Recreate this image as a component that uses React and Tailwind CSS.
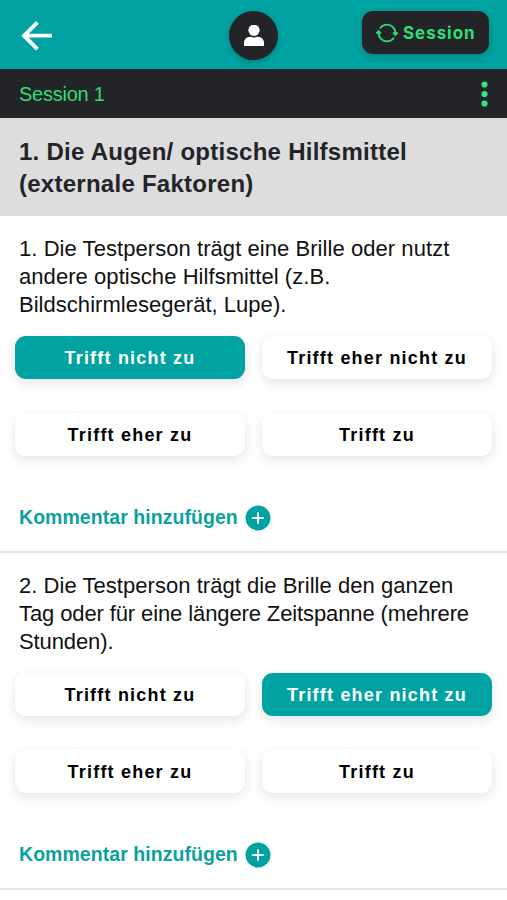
import React from "react";

function SyncIcon() {
  return (
    <svg viewBox="0 0 512 512" className="h-6 w-6 shrink-0" fill="none" stroke="#2fdf75" strokeWidth="40" strokeLinecap="round" strokeLinejoin="round">
      <path d="M434.67 270v-14.2c0-98.73-80.24-178.79-179.2-178.79a179 179 0 0 0-140.14 67.36m-38.53 97v14.8C76.8 355 157 435 256 435a180.45 180.45 0 0 0 140-66.92" />
      <path d="M32 256l44-48 46 48zM480 256l-44 48-46-48z" fill="#2fdf75" strokeWidth="28" />
    </svg>
  );
}

function Header() {
  return (
    <header className="flex h-[69px] bg-[#00a2a2]">
      <svg className="mt-[20px] ml-[20px] h-8 w-8 shrink-0" viewBox="0 0 32 32" fill="none" stroke="#fff" strokeWidth="3.8">
        <path d="M32 15.7H4M17.4 2.3L4 15.7l13.4 13.4" />
      </svg>
      <div className="mt-[11px] ml-[177px] flex h-[49px] w-[49px] shrink-0 items-center justify-center rounded-full bg-[#222428] shadow-[0_3px_6px_rgba(0,0,0,0.18)]">
        <svg className="h-[22px] w-[22px]" viewBox="0 0 22 22" fill="#fff">
          <circle cx="11" cy="5.3" r="5.6" />
          <path d="M1 21v-3.2c0-3.4 2.6-5.9 6.2-6.1 2.4 1.1 5.2 1.1 7.6 0 3.6.2 6.2 2.7 6.2 6.1V21z" />
        </svg>
      </div>
      <button className="mt-[11px] ml-[84px] flex h-[43px] w-[127px] shrink-0 items-center rounded-[11px] bg-[#222428] pl-[13px] font-[family-name:Inter] text-[17px] font-bold tracking-[0.95px] text-[#2fdf75] shadow-[0_3px_8px_rgba(0,0,0,0.18)]">
        <SyncIcon />
        <span className="mt-[3px] ml-[4px]">Session</span>
      </button>
    </header>
  );
}

function Option({ label, active }) {
  return (
    <button
      className={
        "h-[43px] rounded-[11px] pt-px text-[18px] font-bold tracking-[1.2px] whitespace-nowrap shadow-[0_4px_12px_rgba(0,0,0,0.11)] " +
        (active ? "bg-[#00a2a2] text-white" : "bg-white text-black")
      }
    >
      {label}
    </button>
  );
}

const OPTIONS = ["Trifft nicht zu", "Trifft eher nicht zu", "Trifft eher zu", "Trifft zu"];

function Question({ lines, selected }) {
  return (
    <section className="h-[337px] border-b-2 border-[#e4e4e4] pt-[19px]">
      <p className="pl-[19px] text-[22px] leading-[28px] whitespace-nowrap text-[#111]">
        {lines.map(([line, tracking]) => (
          <span key={line} className={"block " + tracking}>{line}</span>
        ))}
      </p>
      <div className="mt-[17px] grid grid-cols-2 gap-x-[17px] gap-y-[34px] px-[15px]">
        {OPTIONS.map((label, i) => (
          <Option key={label} label={label} active={i === selected} />
        ))}
      </div>
      <div className="mt-[49px] flex items-center pl-[19px] text-[19.5px] leading-[26px] font-bold text-[#0aa19f]">
        <span className="-mt-0.5 tracking-[0.05px]">Kommentar hinzufügen</span>
        <svg className="ml-[7px] h-[26px] w-[26px]" viewBox="0 0 26 26">
          <circle cx="13" cy="13" r="12.5" fill="#00a2a2" />
          <path d="M13 7.2v11.6M7.2 13h11.6" stroke="#fff" strokeWidth="1.8" />
        </svg>
      </div>
    </section>
  );
}

export default function App() {
  return (
    <div className="h-[900px] w-[507px] overflow-hidden bg-white font-['Liberation_Sans',Arial,sans-serif]">
      <Header />
      <div className="flex h-[49px] items-center justify-between bg-[#222428] pr-[19px] pl-[19px] text-[20px] text-[#2fdf75]">
        <span className="tracking-[-0.25px]">Session 1</span>
        <svg className="h-[26px] w-[7px]" viewBox="0 0 7 26" fill="#2dea80">
          <circle cx="3.5" cy="3.5" r="3.1" />
          <circle cx="3.5" cy="13" r="3.1" />
          <circle cx="3.5" cy="22.5" r="3.1" />
        </svg>
      </div>
      <h1 className="h-[98px] bg-[#dddddd] pt-[18px] pl-[19px] text-[24px] leading-[32px] font-bold tracking-[0.26px] whitespace-nowrap text-[#222428]">
        <span className="block">1. Die Augen/ optische Hilfsmittel</span>
        <span className="block">(externale Faktoren)</span>
      </h1>
      <Question
        selected={0}
        lines={[
          ["1. Die Testperson trägt eine Brille oder nutzt", "tracking-[0.06px]"],
          ["andere optische Hilfsmittel (z.B.", "tracking-[0.06px]"],
          ["Bildschirmlesegerät, Lupe).", "tracking-[0.03px]"],
        ]}
      />
      <Question
        selected={1}
        lines={[
          ["2. Die Testperson trägt die Brille den ganzen", "tracking-[0.04px]"],
          ["Tag oder für eine längere Zeitspanne (mehrere", "tracking-[-0.11px]"],
          ["Stunden).", "tracking-[-0.11px]"],
        ]}
      />
    </div>
  );
}
